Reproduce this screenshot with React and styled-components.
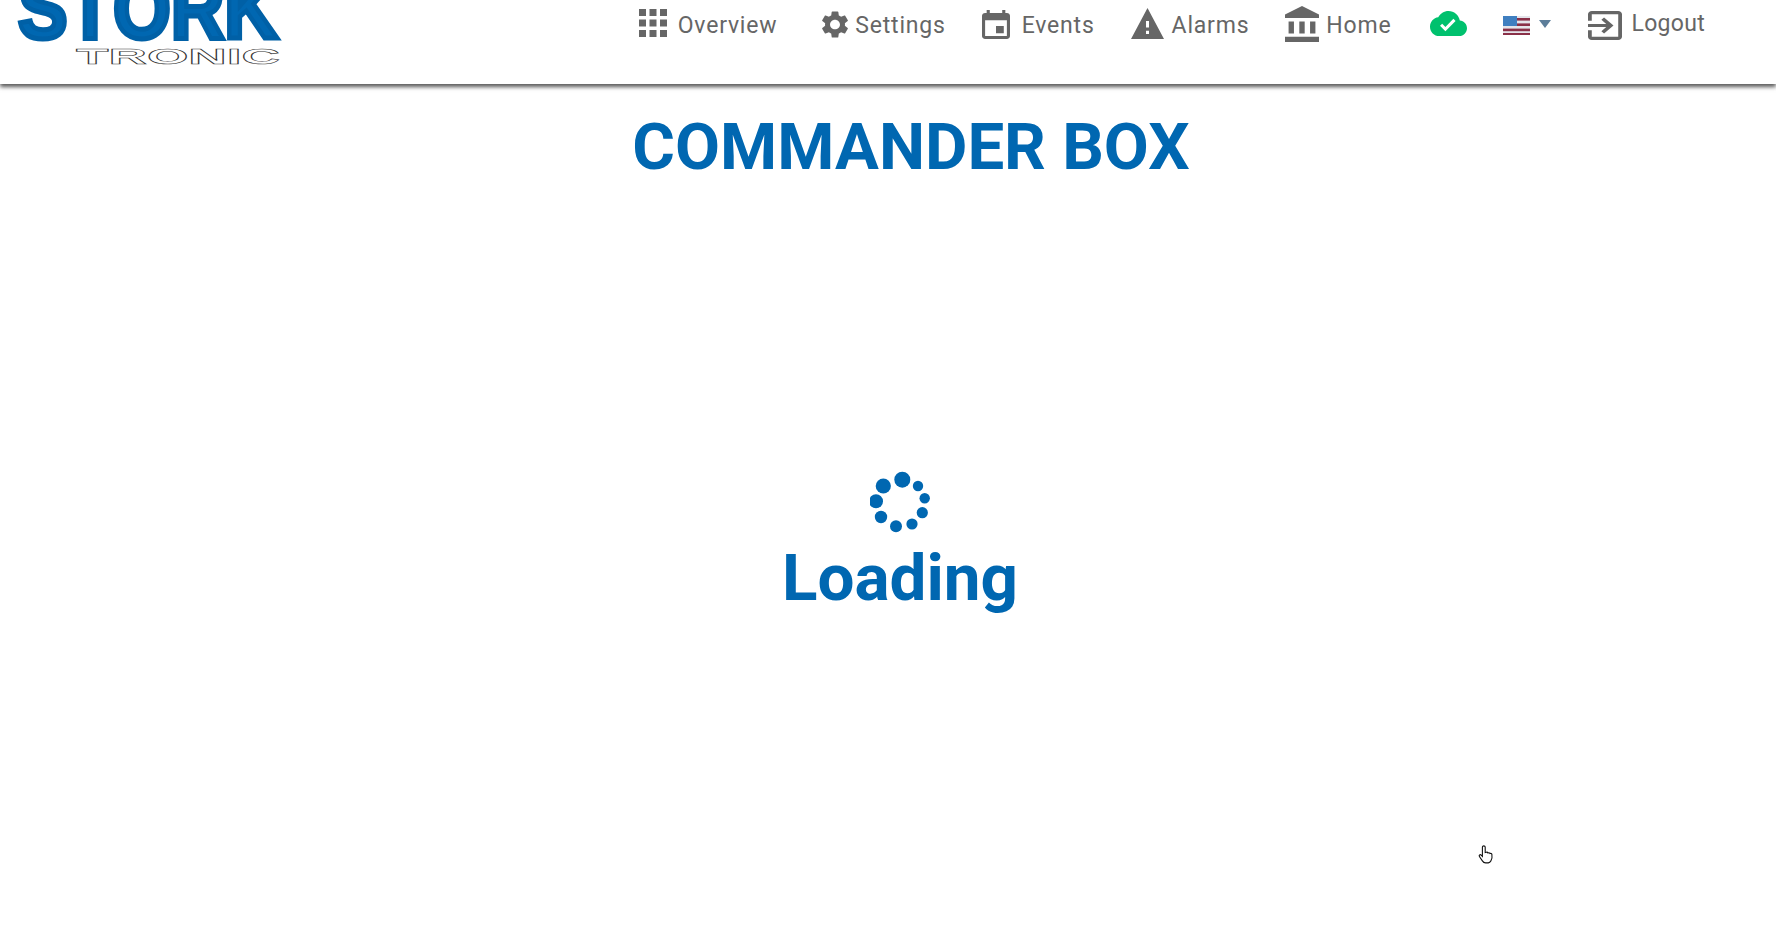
import React from "react";
import styled, { createGlobalStyle } from "styled-components";

const Global = createGlobalStyle`
  html, body { margin: 0; padding: 0; background: #fff; height: 100%; overflow: hidden; }
  body { font-family: Roboto, "Liberation Sans", sans-serif; }
`;

const Page = styled.div`
  position: relative;
  width: 1776px;
  height: 948px;
  background: #fff;
  overflow: hidden;
`;
const Header = styled.header`
  display: flex;
  align-items: flex-start;
  height: 84px;
  padding-right: 71px;
  background: #fff;
  box-shadow: 0 3px 4px rgba(0, 0, 0, 0.65);
`;
const LogoArt = styled.svg`
  display: block;
  width: 300px;
  height: 84px;
  flex: none;
`;
const Nav = styled.nav`
  display: flex;
  align-items: flex-start;
  margin-left: auto;
  height: 50px;
`;
const NavItem = styled.a`
  display: flex;
  align-items: center;
  height: 50px;
  margin-left: ${(p) => p.$gap || 0}px;
  color: #666;
  font-size: 23px;
  font-weight: 400;
  letter-spacing: 0.8px;
  white-space: nowrap;
`;
const NavLabel = styled.span`
  margin-left: ${(p) => p.$gap}px;
  padding-bottom: ${(p) => p.$raise || 0}px;
  letter-spacing: ${(p) => (p.$tight ? "0.3px" : "inherit")};
`;
const Glyph = styled.svg`
  display: block;
  flex: none;
  fill: ${(p) => p.$color || "#666"};
  margin-bottom: ${(p) => p.$raise || 0}px;
`;
const Caret = styled.span`
  width: 0;
  height: 0;
  margin-left: 9px;
  margin-bottom: 2px;
  border-left: 6.5px solid transparent;
  border-right: 6.5px solid transparent;
  border-top: 8px solid #5c7d99;
`;
const Title = styled.h1`
  margin: 23px 0 0;
  padding-left: 46px;
  text-align: center;
  color: #0067b1;
  font-size: 65.3px;
  line-height: 80px;
  font-weight: 700;
  letter-spacing: 0;
`;
const Loader = styled.section`
  display: flex;
  flex-direction: column;
  align-items: center;
  margin-top: 284px;
  padding-left: 24px;
`;
const Spinner = styled.svg`
  display: block;
  width: 60px;
  height: 63px;
  fill: #0067b1;
`;
const LoaderText = styled.div`
  color: #0067b1;
  font-size: 65.6px;
  line-height: 80px;
  font-weight: 700;
  margin-top: 4px;
`;
const Cursor = styled.svg`
  position: absolute;
  left: 1478px;
  top: 845px;
  width: 16px;
  height: 20px;
`;

const Icon = ({ d, box, w, h, color, raise }) => (
  <Glyph viewBox={box} width={w} height={h} preserveAspectRatio="none" $color={color} $raise={raise}>
    <path d={d} />
  </Glyph>
);

const paths = {
  apps: "M4 8h4V4H4v4zm6 12h4v-4h-4v4zm-6 0h4v-4H4v4zm0-6h4v-4H4v4zm6 0h4v-4h-4v4zm6-10v4h4V4h-4zm-6 4h4V4h-4v4zm6 6h4v-4h-4v4zm0 6h4v-4h-4v4z",
  gear: "M19.14 12.94c.04-.3.06-.61.06-.94 0-.32-.02-.64-.07-.94l2.03-1.58c.18-.14.23-.41.12-.61l-1.92-3.32c-.12-.22-.37-.29-.59-.22l-2.39.96c-.5-.38-1.03-.7-1.62-.94l-.36-2.54c-.04-.24-.24-.41-.48-.41h-3.84c-.24 0-.43.17-.47.41l-.36 2.54c-.59.24-1.13.57-1.62.94l-2.39-.96c-.22-.08-.47 0-.59.22L2.74 8.87c-.12.21-.08.47.12.61l2.03 1.58c-.05.3-.09.63-.09.94s.02.64.07.94l-2.03 1.58c-.18.14-.23.41-.12.61l1.92 3.32c.12.22.37.29.59.22l2.39-.96c.5.38 1.03.7 1.62.94l.36 2.54c.05.24.24.41.48.41h3.84c.24 0 .44-.17.47-.41l.36-2.54c.59-.24 1.13-.56 1.62-.94l2.39.96c.22.08.47 0 .59-.22l1.92-3.32c.12-.22.07-.47-.12-.61l-2.01-1.58zM12 15.6c-1.98 0-3.6-1.62-3.6-3.6s1.62-3.6 3.6-3.6 3.6 1.62 3.6 3.6-1.62 3.6-3.6 3.6z",
  event: "M17 12h-5v5h5v-5zM16 1v2H8V1H6v2H5c-1.11 0-1.99.9-1.99 2L3 19c0 1.1.89 2 2 2h14c1.1 0 2-.9 2-2V5c0-1.1-.9-2-2-2h-1V1h-2zm3 18H5V8h14v11z",
  warning: "M1 21h22L12 2 1 21zm12-3h-2v-2h2v2zm0-4h-2v-4h2v4z",
  bank: "M4 10v7h3v-7H4zm6 0v7h3v-7h-3zM2 22h19v-3H2v3zm14-12v7h3v-7h-3zm-4.5-9L2 6v2h19V6l-9.5-5z",
  cloud: "M19.35 10.04C18.67 6.59 15.64 4 12 4 9.11 4 6.6 5.64 5.35 8.04 2.34 8.36 0 10.91 0 14c0 3.31 2.69 6 6 6h13c2.76 0 5-2.24 5-5 0-2.64-2.05-4.78-4.65-4.96zM10 17l-3.5-3.5 1.41-1.41L10 14.17 15.18 9l1.41 1.41L10 17z",
  exit: "M10.09 15.59L11.5 17l5-5-5-5-1.41 1.41L12.67 11H3v2h9.67l-2.58 2.59zM19 3H5c-1.11 0-2 .9-2 2v4h2V5h14v14H5v-4H3v4c0 1.1.89 2 2 2h14c1.1 0 2-.9 2-2V5c0-1.1-.9-2-2-2z",
};

const Logo = () => (
  <LogoArt viewBox="0 0 300 84">
    <text
      x="18"
      y="37.5"
      textLength="260"
      lengthAdjust="spacingAndGlyphs"
      fontFamily="'Liberation Sans', Arial, sans-serif"
      fontWeight="700"
      fontSize="86"
      fill="#0067b1"
      stroke="#0060a6"
      strokeWidth="5"
    >
      STÖRK
    </text>
    <text
      x="76"
      y="64"
      textLength="204"
      lengthAdjust="spacingAndGlyphs"
      fontFamily="'Liberation Sans', Arial, sans-serif"
      fontWeight="700"
      fontSize="22"
      fill="#fff"
      stroke="#333"
      strokeWidth="0.55"
    >
      TRONIC
    </text>
  </LogoArt>
);

const Flag = () => (
  <Glyph viewBox="0 0 27 19" width={27} height={19}>
    <rect width="27" height="19" fill="#e4e4ea" />
    <rect y="2" width="27" height="2.6" fill="#8a3048" />
    <rect y="7.4" width="27" height="2.6" fill="#8a3048" />
    <rect y="12.6" width="27" height="2.6" fill="#8a3048" />
    <rect y="17" width="27" height="2" fill="#8a3048" />
    <rect width="14" height="10" fill="#3f7fc0" />
  </Glyph>
);

const dots = [
  [32.3, 5.7, 8],
  [13.3, 12, 7.6],
  [6, 27.3, 7],
  [11, 43, 6.2],
  [26, 52.3, 6],
  [42, 50, 5.6],
  [52.3, 38.7, 5.6],
  [54.7, 24.3, 5.2],
  [48, 12, 5.2],
];

export default function App() {
  return (
    <Page>
      <Global />
      <Header>
        <Logo />
        <Nav>
          <NavItem>
            <Icon d={paths.apps} box="4 4 16 16" w={28} h={28} raise={4} />
            <NavLabel $gap={11}>Overview</NavLabel>
          </NavItem>
          <NavItem $gap={45}>
            <Icon d={paths.gear} box="2.6 2 18.8 20" w={26} h={27} raise={2} />
            <NavLabel $gap={7}>Settings</NavLabel>
          </NavItem>
          <NavItem $gap={36}>
            <Icon d={paths.event} box="3 1 18 20" w={28} h={29} raise={1} />
            <NavLabel $gap={12}>Events</NavLabel>
          </NavItem>
          <NavItem $gap={36}>
            <Icon d={paths.warning} box="1 2 22 19" w={33} h={31} raise={4} />
            <NavLabel $gap={8}>Alarms</NavLabel>
          </NavItem>
          <NavItem $gap={36}>
            <Icon d={paths.bank} box="2 1 19 21" w={34} h={36} raise={2} />
            <NavLabel $gap={7}>Home</NavLabel>
          </NavItem>
          <NavItem $gap={39}>
            <Icon d={paths.cloud} box="0 4 24 16" w={37} h={25} color="#00c16e" raise={3} />
          </NavItem>
          <NavItem $gap={36}>
            <Flag />
            <Caret />
          </NavItem>
          <NavItem $gap={37}>
            <Icon d={paths.exit} box="3 3 18 18" w={34} h={29} />
            <NavLabel $gap={9} $raise={4} $tight>Logout</NavLabel>
          </NavItem>
        </Nav>
      </Header>
      <main>
        <Title>COMMANDER BOX</Title>
        <Loader>
          <Spinner viewBox="0 -3 60 63">
            {dots.map(([cx, cy, r]) => (
              <circle key={`${cx}-${cy}`} cx={cx} cy={cy} r={r} />
            ))}
          </Spinner>
          <LoaderText>Loading</LoaderText>
        </Loader>
      </main>
      <Cursor viewBox="0 0 16 20">
        <path
          d="M4.4 2.2c0-1.8 2.8-1.8 2.8 0v5.4l1-.3c.8-.3 1.5 0 1.8.7.8-.4 1.6-.2 2 .5.9-.3 1.7.2 1.9 1 .4 2.4.2 4.6-1 6.4-.6 1-1.4 1.8-2.6 2H7.6c-1.6 0-2.6-1-3.4-2.3L1.4 11.5c-.8-1.2.8-2.4 1.8-1.4l1.2 1.3V2.2z"
          fill="#fff"
          stroke="#111"
          strokeWidth="1.1"
        />
      </Cursor>
    </Page>
  );
}
